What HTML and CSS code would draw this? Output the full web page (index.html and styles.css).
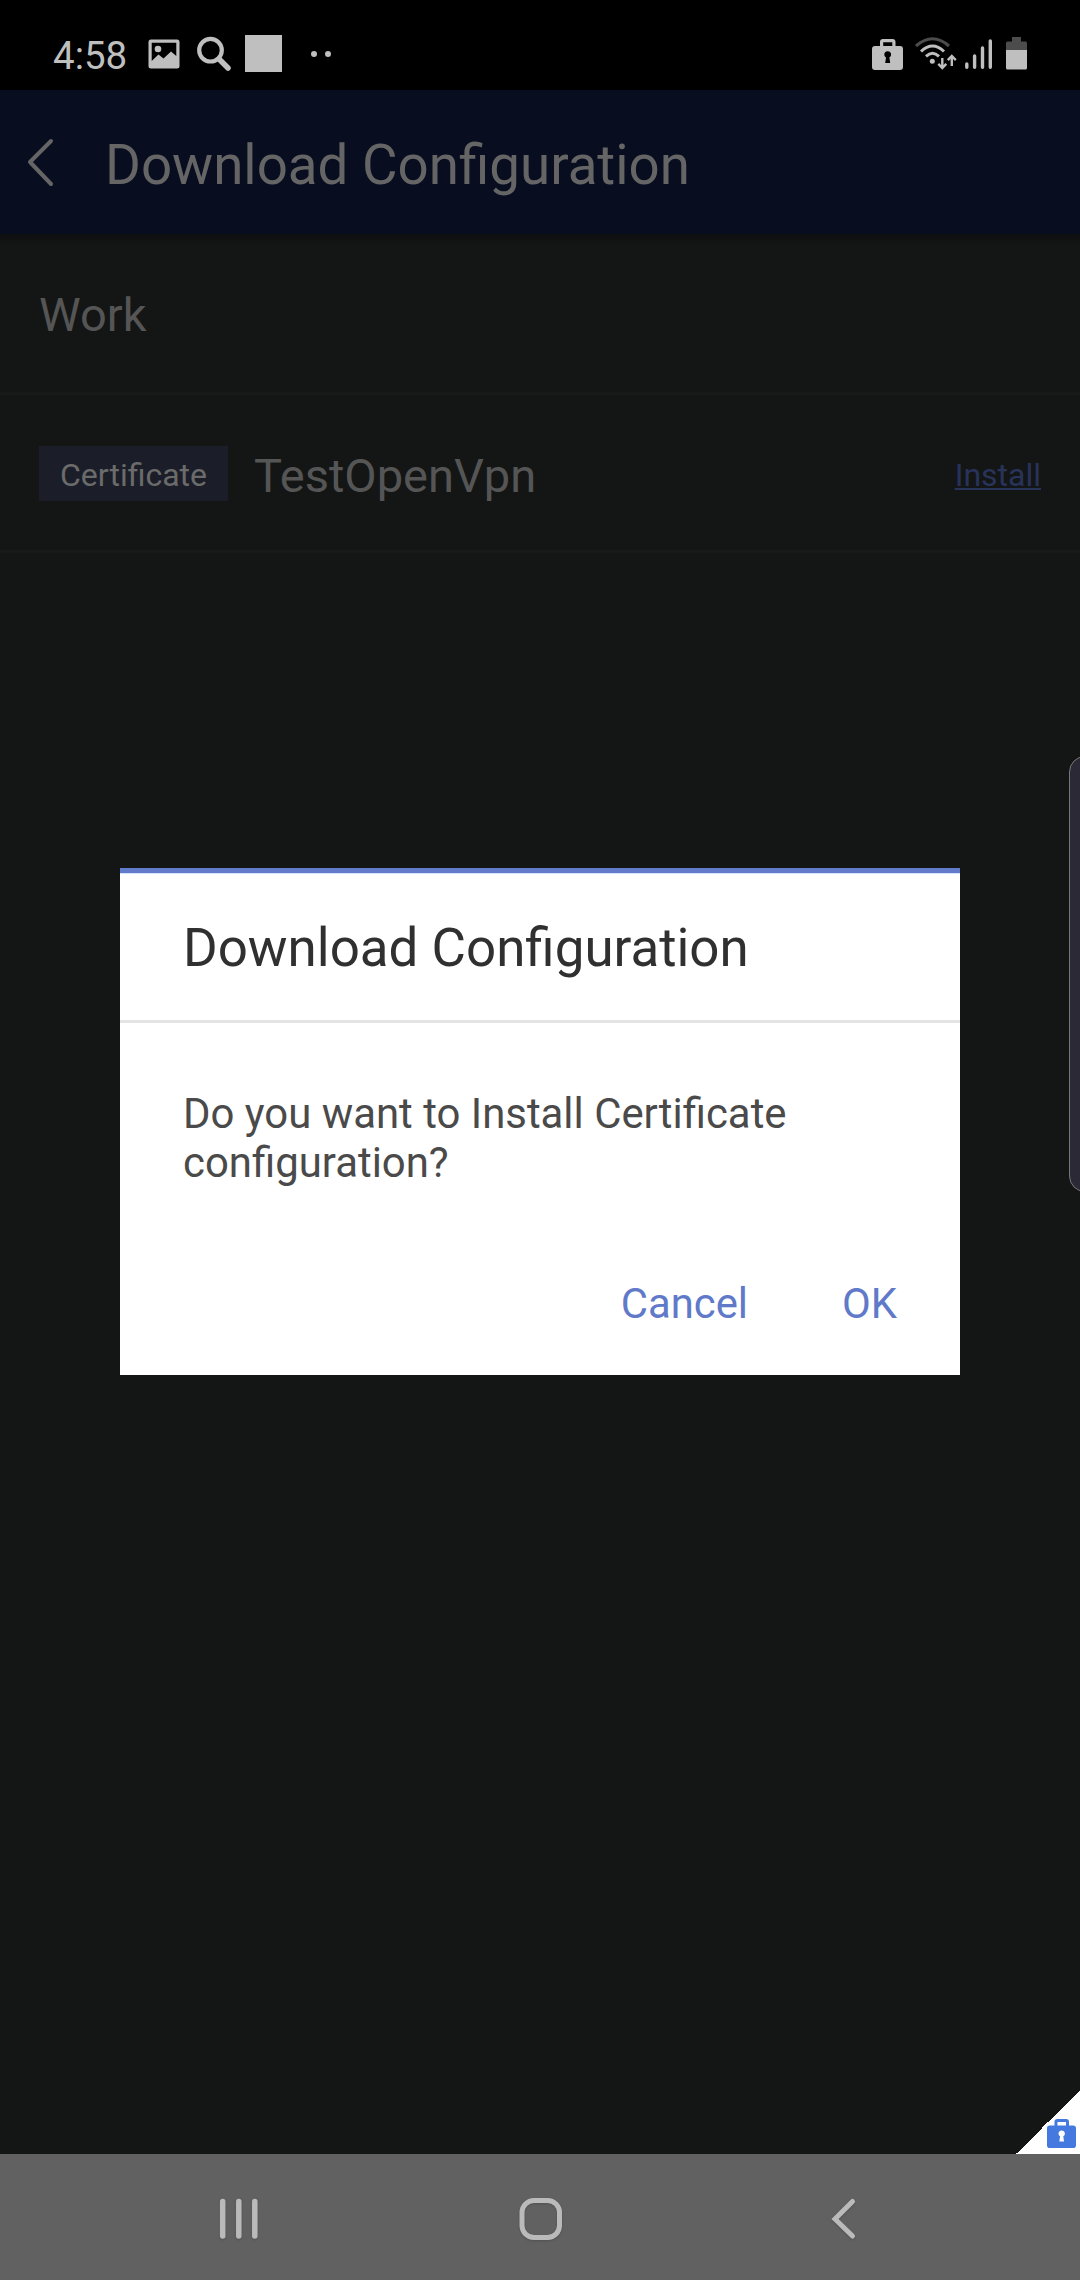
FILE: index.html
```html
<!DOCTYPE html>
<html lang="en">
<head>
<meta charset="utf-8">
<title>Download Configuration</title>
<link rel="stylesheet" href="styles.css">
</head>
<body>
<div class="screen">
  <div class="status">
    <span class="clock">4:58</span>
    <svg class="i-photo" width="32" height="31" viewBox="0 0 32 31"><path fill="currentColor" fill-rule="evenodd" d="M3 0.5H29Q31.5 0.5 31.5 3V27Q31.5 29.5 29 29.5H3Q0.5 29.5 0.5 27V3Q0.5 0.5 3 0.5ZM3.7 3.7V22L10.5 15.5L15.5 19.5L23 12.5L28.3 17V3.7Z"/><circle cx="10" cy="10" r="3.3" fill="currentColor"/></svg>
    <svg class="i-search" width="35" height="36" viewBox="0 0 35 36" fill="none" stroke="currentColor"><circle cx="13.5" cy="14.2" r="11.3" stroke-width="4.2"/><path d="M22 23L31 32" stroke-width="5.5" stroke-linecap="round"/></svg>
    <span class="square"></span>
    <span class="more"><i></i><i></i></span>
    <svg class="i-case" width="31" height="32" viewBox="0 0 31 32"><use href="#case"/></svg>
    <svg class="i-wifi" width="42" height="34" viewBox="0 0 42 34" fill="none" stroke="currentColor" stroke-linecap="butt"><path d="M1 9Q17.5-5.5 34 9" stroke-width="3" opacity=".4"/><path d="M6 14.5Q17.5 3.5 29 14.5M11 19.3Q17.5 13.2 24 19.3" stroke-width="3"/><circle cx="17.3" cy="24.3" r="2.5" fill="currentColor" stroke="none"/><path d="M27.3 21V31M23.3 26.8L27.3 31L31.3 26.8M36.8 29V19M32.8 23.2L36.8 19L40.8 23.2" stroke-width="2.4"/></svg>
    <svg class="i-signal" width="28" height="31" viewBox="0 0 28 31" stroke="currentColor" stroke-width="3.4" stroke-linecap="round"><path d="M1.8 25V28.3M9.6 17V28.3M17.5 9V28.3M25.3 2V28.3"/></svg>
    <svg class="i-battery" width="21" height="33" viewBox="0 0 21 33" fill="currentColor"><path d="M6 0H15V4.5H19.5Q21 4.5 21 6V13H0V6Q0 4.5 1.5 4.5H6Z" opacity=".4"/><path d="M0 13H21V31Q21 32.5 19.5 32.5H1.5Q0 32.5 0 31Z"/></svg>
  </div>

  <header class="appbar">
    <svg width="27" height="50" viewBox="0 0 27 50" fill="none" stroke="currentColor" stroke-width="4" stroke-linecap="round" stroke-linejoin="round"><path d="M24 4L3 25L24 47"/></svg>
    <h1>Download Configuration</h1>
  </header>

  <main class="content">
    <div class="row section">Work</div>
    <div class="row item">
      <span class="badge">Certificate</span>
      <span class="name">TestOpenVpn</span>
      <a class="install">Install</a>
    </div>
    <span class="edge"></span>
    <span class="corner"><svg width="29" height="30" viewBox="0 0 31 32"><g id="case"><path fill="currentColor" fill-rule="evenodd" d="M8 7V3Q8 0 11 0H20.500Q23.500 0 23.500 3V7H28Q31 7 31 10V28Q31 31 28 31H3Q0 31 0 28V10Q0 7 3 7ZM11.200 3.300V7H20.300V3.300ZM14 18.500L13.200 24H18.200L17.400 18.500A3.400 3.400 0 1 0 14 18.500Z"/></g></svg></span>
  </main>

  <nav class="navbar">
    <svg class="n-recent" width="40" height="50" viewBox="0 0 40 50" stroke="currentColor" stroke-width="5.500" stroke-linecap="round"><path d="M3.700 7.500V42M19.800 7.500V42M35.800 7.500V42"/></svg>
    <svg class="n-home" width="44" height="50" viewBox="0 0 44 50" fill="none" stroke="currentColor" stroke-width="5"><rect x="3" y="6.500" width="37.500" height="37" rx="12"/></svg>
    <svg class="n-back" width="26" height="50" viewBox="0 0 26 50" fill="none" stroke="currentColor" stroke-width="5" stroke-linecap="round"><path d="M21.500 7.500L4 25L21.500 42"/></svg>
  </nav>

  <section class="dialog">
    <h2>Download Configuration</h2>
    <p>Do you want to Install Certificate configuration?</p>
    <div class="actions"><span>Cancel</span><span>OK</span></div>
  </section>
</div>
</body>
</html>
```

FILE: styles.css
```css
* { box-sizing: border-box; }
body { margin: 0; background: #141615; font-family: Roboto, sans-serif; }
h1, h2, p { margin: 0; font-weight: 400; }
svg { display: block; flex: none; }

.screen {
  position: relative;
  display: flex;
  flex-direction: column;
  width: 1080px;
  height: 2280px;
  overflow: hidden;
}

/* Status bar */
.status {
  display: flex;
  align-items: flex-start;
  height: 90px;
  padding: 35px 53px 0 53px;
  background: #000;
  color: #bfbfbf;
}
.clock { width: 95px; font-size: 38.5px; line-height: 42px; }
.i-photo { margin-top: 4px; }
.i-search { margin: 1px 0 0 17px; }
.square { width: 37px; height: 37px; margin-left: 13px; background: #bfbfbf; }
.more { display: flex; gap: 8px; margin: 16px 0 0 29px; }
.more i { width: 6px; height: 6px; border-radius: 50%; background: #bfbfbf; }
.i-case { margin: 4px 0 0 auto; }
.i-wifi { margin: 2px 0 0 12px; }
.i-signal { margin: 4px 0 0 8px; }
.i-battery { margin: 2px 0 0 13px; }

/* App bar */
.appbar {
  display: flex;
  align-items: center;
  gap: 51px;
  height: 144px;
  padding-left: 27px;
  background: #080e20;
  color: #656565;
}
.appbar h1 { padding-top: 6px; font-size: 54.7px; line-height: 64px; }

/* Configuration list */
.content {
  position: relative;
  flex: 1;
  background: linear-gradient(#0d0e0f, #141615 12px);
}
.row {
  display: flex;
  align-items: center;
  padding: 0 39px;
  border-bottom: 3px solid #181a1a;
  color: #555;
  font-size: 47px;
}
.section { height: 161px; padding-top: 3px; }
.item { height: 158px; }
.badge {
  width: 189px;
  height: 55px;
  margin-top: 2px;
  padding-top: 2px;
  background: #1b1e29;
  color: #6b6b6b;
  font-size: 32px;
  line-height: 54px;
  text-align: center;
}
.name { margin-left: 26px; padding-top: 6px; }
.install {
  margin-left: auto;
  padding-top: 5px;
  color: #28335a;
  font-size: 32px;
  text-decoration: underline;
  text-decoration-thickness: 2px;
  text-underline-offset: 2px;
  text-decoration-skip-ink: none;
}
.edge {
  position: absolute;
  top: 522px;
  right: -10px;
  width: 21px;
  height: 436px;
  border: 1px solid #777;
  border-radius: 16px 0 0 16px;
  background: #2c2937;
}
.corner {
  position: absolute;
  right: 0;
  bottom: 0;
  width: 64px;
  height: 64px;
  padding: 29px 0 0 31px;
  background: linear-gradient(135deg, transparent 50%, #fff 50%);
  color: #4479e0;
}

/* Navigation bar */
.navbar {
  display: flex;
  align-items: flex-start;
  justify-content: space-between;
  height: 126px;
  padding: 40px 223px 0 219px;
  background: #616161;
  color: #bababa;
}
.navbar svg { filter: drop-shadow(0 1px 1px #4448); }
.n-home { margin-right: 8px; }

/* Dialog */
.dialog {
  position: absolute;
  top: 868px;
  left: 120px;
  width: 840px;
  height: 507px;
  border-top: 5px solid #637bcb;
  background: #fff;
  box-shadow: inset 0 1px #d5e2fa;
}
.dialog h2 {
  height: 150px;
  padding: 1px 0 0 63px;
  border-bottom: 3px solid #e4e4e4;
  color: #303030;
  font-size: 52.9px;
  line-height: 148px;
}
.dialog p {
  height: 203px;
  padding: 66px 130px 0 63px;
  color: #4a4a4a;
  font-size: 41.9px;
  line-height: 49px;
}
.actions {
  display: flex;
  justify-content: flex-end;
  gap: 94px;
  padding: 53px 63px 0 0;
  color: #6079c9;
  font-size: 41.8px;
  line-height: 49px;
}
```
